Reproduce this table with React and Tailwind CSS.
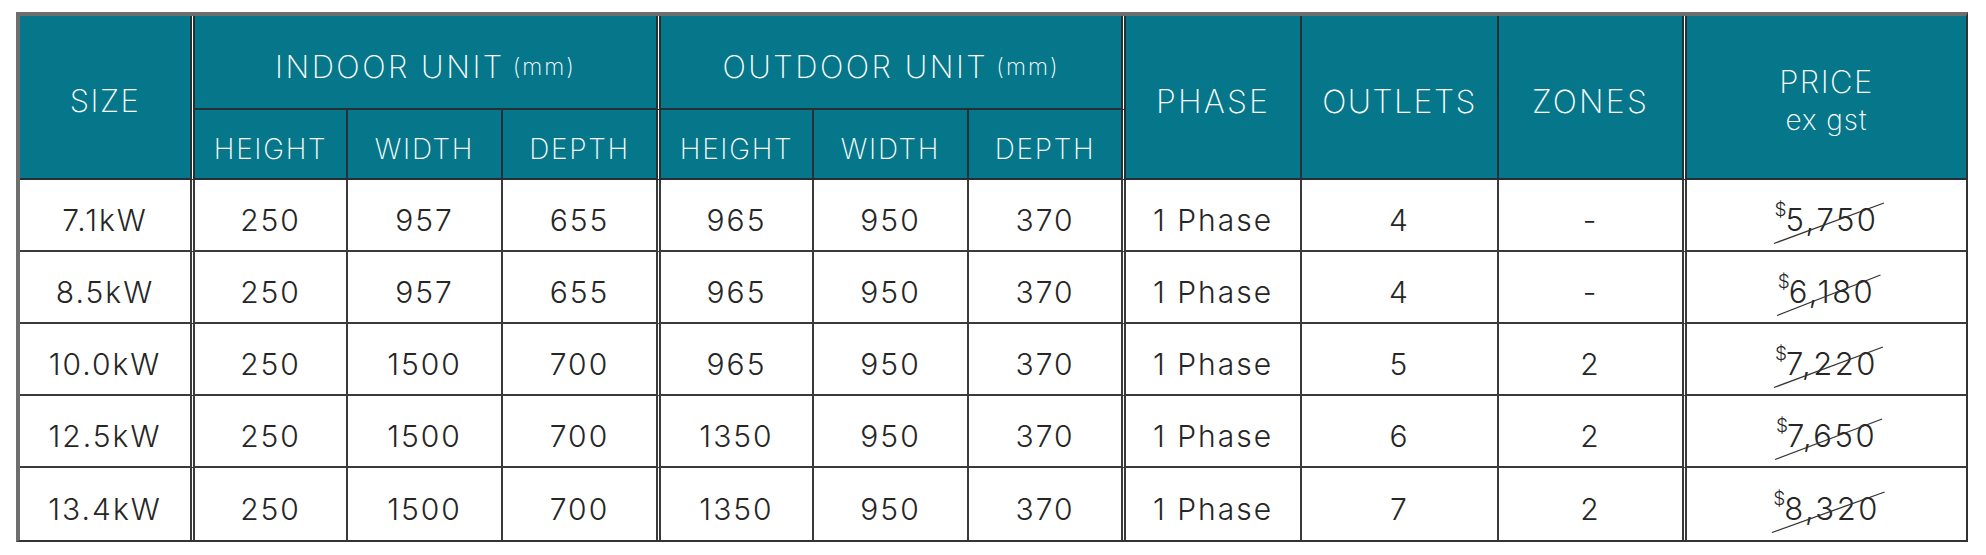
import React from "react";

const HB = "flex items-center justify-center bg-[#06778a] text-white bg-clip-padding border-[#263034] font-extralight";
const DB = "flex items-center justify-center bg-white text-[#262626] border-[#3a3a3a] font-light";
const R = "border-r-2";
const RD = "border-r-[5px] [border-right-style:double]!";

const rows = [
  ["7.1kW", "250", "957", "655", "965", "950", "370", "1 Phase", "4", "-", "5,750"],
  ["8.5kW", "250", "957", "655", "965", "950", "370", "1 Phase", "4", "-", "6,180"],
  ["10.0kW", "250", "1500", "700", "965", "950", "370", "1 Phase", "5", "2", "7,220"],
  ["12.5kW", "250", "1500", "700", "1350", "950", "370", "1 Phase", "6", "2", "7,650"],
  ["13.4kW", "250", "1500", "700", "1350", "950", "370", "1 Phase", "7", "2", "8,320"],
];

const rightCls = [RD, R, R, RD, R, R, RD, R, R, RD, ""];

function Price({ v }) {
  return (
    <span className="relative inline-flex items-start">
      <span className="text-[19px] leading-none mt-[3px] mr-[-1px] tracking-normal">$</span>
      <span className="text-[31px] tracking-[2.5px]">{v}</span>
      <svg className="absolute left-[-1px] top-[6px] w-[calc(100%+6px)] h-[calc(100%-6px)] overflow-visible" preserveAspectRatio="none">
        <line x1="0%" y1="100%" x2="100%" y2="0%" stroke="#333" strokeWidth="1.3" />
      </svg>
    </span>
  );
}

export default function App() {
  return (
    <div className="bg-white w-[1986px] h-[555px] pt-[12px] pl-[16px] [font-family:Inter,sans-serif]">
      <div className="w-[1952px] bg-white border-t-4 border-l-4 border-t-[#6e6e6e] border-l-[#6e6e6e] border-r-2 border-b-2 border-r-[#333] border-b-[#333] grid grid-cols-[175px_153px_155px_158px_153px_155px_157px_176px_197px_188px_279px] grid-rows-[94px_70px_72px_72px_72px_72px_72px]">
        <div className={`${HB} ${RD} border-b-2 row-span-2 text-[31px] tracking-[1.5px] pt-[9px]`}>SIZE</div>
        <div className={`${HB} ${RD} border-b-2 col-span-3 text-[31px] tracking-[2.5px] pt-[11px]`}>
          INDOOR UNIT<span className="text-[23px] ml-[8px] tracking-[2px]">(mm)</span>
        </div>
        <div className={`${HB} ${RD} border-b-2 col-span-3 text-[31px] tracking-[2.5px] pt-[11px]`}>
          OUTDOOR UNIT<span className="text-[23px] ml-[8px] tracking-[2px]">(mm)</span>
        </div>
        <div className={`${HB} ${R} border-b-2 row-span-2 text-[32px] tracking-[2.2px] pt-[9px]`}>PHASE</div>
        <div className={`${HB} ${R} border-b-2 row-span-2 text-[32px] tracking-[1.5px] pt-[9px]`}>OUTLETS</div>
        <div className={`${HB} ${RD} border-b-2 row-span-2 text-[32px] tracking-[2.2px] pt-[9px]`}>ZONES</div>
        <div className={`${HB} border-b-2 row-span-2 flex-col text-[31px] tracking-[1.5px] leading-[38px] pt-[8px]`}>
          <span>PRICE</span>
          <span className="text-[28px] tracking-[1px]">ex gst</span>
        </div>
        {["HEIGHT", "WIDTH", "DEPTH", "HEIGHT", "WIDTH", "DEPTH"].map((t, i) => (
          <div key={i} className={`${HB} ${i === 2 || i === 5 ? RD : R} border-b-2 text-[28px] tracking-[1.7px] pt-[9px]`}>
            {t}
          </div>
        ))}
        {rows.map((row, ri) =>
          row.map((c, ci) => (
            <div
              key={`${ri}-${ci}`}
              className={`${DB} ${rightCls[ci]} ${ri < rows.length - 1 ? "border-b-2" : ""} text-[30px] tracking-[2px] pt-[11px]`}
            >
              {ci === 10 ? <Price v={c} /> : c}
            </div>
          ))
        )}
      </div>
    </div>
  );
}
